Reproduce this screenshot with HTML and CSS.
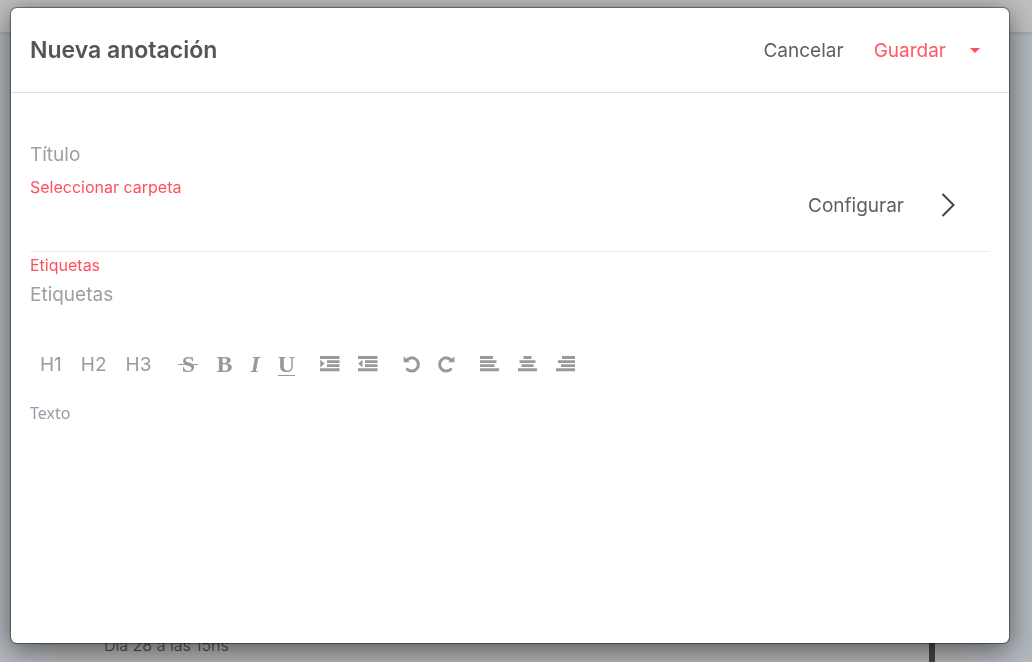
FILE: index.html
```html
<!DOCTYPE html>
<html lang="es">
  <head>
    <meta charset="UTF-8" />
    <meta name="viewport" content="width=device-width, initial-scale=1.0" />
    <title>Nueva anotación</title>
    <link rel="stylesheet" href="styles.css">
  </head>
  <body>
    <div class="page">
      <div class="topbar"></div>
      <div class="card">
        <p class="card-text">Día 28 a las 15hs</p>
        <div class="card-bar"></div>
      </div>
    </div>

    <div class="overlay">
      <form class="modal" role="dialog" aria-labelledby="modal-title">
        <header class="modal-header">
          <h1 id="modal-title">Nueva anotación</h1>
          <button type="button" class="action">Cancelar</button>
          <button type="submit" class="action save">Guardar</button>
          <button type="button" class="caret" aria-label="Más opciones">
            <svg width="10" height="5" viewBox="0 0 10 5"><path d="M0 0h10L5 5z" /></svg>
          </button>
        </header>

        <div class="modal-body">
          <div class="settings">
            <div class="main-fields">
              <input class="field" type="text" placeholder="Título" aria-label="Título">
              <button type="button" class="folder">Seleccionar carpeta</button>
            </div>
            <button type="button" class="configure">
              Configurar
              <svg width="14" height="26" viewBox="0 0 14 26"><path d="M1.500 2l11 11-11 11" /></svg>
            </button>
          </div>

          <div class="tags">
            <label for="tags">Etiquetas</label>
            <input class="field" id="tags" type="text" placeholder="Etiquetas">
          </div>

          <div class="toolbar">
            <div class="group headings">
              <button type="button">H1</button>
              <button type="button">H2</button>
              <button type="button">H3</button>
            </div>
            <div class="group styles">
              <button type="button" class="strike">S</button>
              <button type="button" class="bold">B</button>
              <button type="button" class="italic">I</button>
              <button type="button" class="underline">U</button>
            </div>
            <div class="group">
              <button type="button" aria-label="Aumentar sangría">
                <svg width="20" height="16" viewBox="0 0 20 16"><path d="M0 0h19.500v3H0zM7 4.200h12.500v2.700H7zM7 8.200h12.500v2.700H7zM0 12.300h19.500v3H0zM.3 3.800L4.500 7.600.3 11.400z" /></svg>
              </button>
              <button type="button" aria-label="Reducir sangría">
                <svg width="20" height="16" viewBox="0 0 20 16"><path d="M0 0h19.500v3H0zM7 4.200h12.500v2.700H7zM7 8.200h12.500v2.700H7zM0 12.300h19.500v3H0zM4.500 3.800L.3 7.600l4.200 3.800z" /></svg>
              </button>
            </div>
            <div class="group history">
              <button type="button" aria-label="Deshacer">
                <svg width="18" height="18" viewBox="0 0 18 18"><path class="arc" d="M3.500 5.500A6.600 6.600 0 1 1 4.300 14.300" /><path d="M.6 1.200v6h6.200z" /></svg>
              </button>
              <button type="button" aria-label="Rehacer">
                <svg width="18" height="18" viewBox="0 0 18 18"><path class="arc" d="M14.500 5.500A6.600 6.600 0 1 0 13.700 14.300" /><path d="M17.400 1.200v6h-6.200z" /></svg>
              </button>
            </div>
            <div class="group">
              <button type="button" aria-label="Alinear a la izquierda">
                <svg width="20" height="16" viewBox="0 0 20 16"><path d="M0 0h13v2.900H0zM0 4.200h16.500v2.700H0zM0 8.200h14.500v2.700H0zM0 12.300h19v2.900H0z" /></svg>
              </button>
              <button type="button" aria-label="Centrar">
                <svg width="20" height="16" viewBox="0 0 20 16"><path d="M5.500 0h8v2.900h-8zM1.500 4.200h16v2.700h-16zM3.500 8.200h12v2.700h-12zM0 12.300h19v2.900H0z" /></svg>
              </button>
              <button type="button" aria-label="Alinear a la derecha">
                <svg width="20" height="16" viewBox="0 0 20 16"><path d="M6 0h13v2.900H6zM2 4.200h17v2.700H2zM5 8.200h14v2.700H5zM0 12.300h19v2.900H0z" /></svg>
              </button>
            </div>
          </div>

          <textarea class="editor" placeholder="Texto" aria-label="Texto"></textarea>
        </div>
      </form>
    </div>
  </body>
</html>
```
FILE: styles.css
```css
* {
  box-sizing: border-box;
  margin: 0;
  padding: 0;
}
body {
  color: #555;
  font-family: Inter, "Liberation Sans", sans-serif;
  font-size: 19px;
}
button,
input,
textarea {
  border: none;
  background: none;
  color: inherit;
  font: inherit;
  outline: none;
}
button {
  cursor: pointer;
}

/* page behind the dialog */
.page {
  display: flex;
  flex-direction: column;
  height: 100vh;
  overflow: hidden;
  background-color: #b3b8be;
}
.topbar {
  height: 32px;
  background-color: #bfbfbf;
  box-shadow: 0 1px 4px rgba(0, 0, 0, 0.15);
}
.card {
  flex: 1;
  display: flex;
  align-items: flex-end;
  justify-content: space-between;
  margin: 0 66px 0 54px;
  padding: 0 31px 0 50px;
  background-color: #b5b5b5;
}
.card-text {
  padding-bottom: 5px;
  color: #444;
  font-size: 16px;
  font-weight: 300;
  line-height: 24px;
}
.card-bar {
  width: 6px;
  height: 100%;
  background-color: #444;
}

/* dialog */
.overlay {
  position: fixed;
  inset: 0;
  display: flex;
  padding: 8px 23px 19px 11px;
}
.modal {
  flex: 1;
  display: flex;
  flex-direction: column;
  border-radius: 6px;
  background-color: #fff;
  box-shadow: 0 0 1px 1px rgba(0, 0, 0, 0.4), 0 6px 28px rgba(0, 0, 0, 0.55);
}
.modal-header {
  display: flex;
  align-items: center;
  height: 85px;
  padding: 0 29px 0 19px;
  border-bottom: 1px solid #e0e0e0;
}
.modal-header h1 {
  flex: 1;
  font-size: 23px;
  font-weight: 600;
}
.action,
.configure {
  color: #606060;
}
.action {
  margin-right: 30px;
}
.save {
  margin-right: 24px;
  color: #ff5a64;
}
.caret {
  display: flex;
}
.caret svg {
  fill: #ff4f5a;
}
.modal-body {
  flex: 1;
  display: flex;
  flex-direction: column;
  padding: 0 19px 19px;
}
.settings {
  display: flex;
  justify-content: space-between;
  height: 159px;
  padding-top: 45px;
  border-bottom: 1px solid #ebedf3;
}
.main-fields {
  flex: 1;
}
.field {
  display: block;
  width: 100%;
  height: 32px;
}
.field::placeholder {
  color: #9f9f9f;
}
.folder,
.tags label {
  display: block;
  color: #ff4f5a;
  font-size: 16px;
  line-height: 26px;
}
.folder {
  margin-top: 4px;
}
.configure {
  display: flex;
  align-items: center;
  gap: 37px;
  height: 28px;
  margin: 53px 35px 0 0;
}
.configure svg {
  fill: none;
  stroke: #444;
  stroke-width: 2;
}

/* editor */
.toolbar {
  display: flex;
  align-items: center;
  gap: 25px;
  height: 40px;
  margin-top: 34px;
  padding-left: 10px;
  color: #999;
}
.group {
  display: flex;
  align-items: center;
  gap: 18px;
}
.headings {
  gap: 19px;
  margin-right: 2px;
}
.history {
  gap: 16px;
}
.toolbar svg {
  display: block;
  fill: #999;
}
.toolbar .arc {
  fill: none;
  stroke: #999;
  stroke-width: 3;
  stroke-linecap: round;
}
.styles {
  font-family: "Liberation Serif", serif;
  font-size: 24px;
  font-weight: 700;
}
.strike {
  position: relative;
  width: 20px;
}
.strike::after {
  content: "";
  position: absolute;
  top: 50%;
  left: 0;
  width: 100%;
  height: 1px;
  background-color: #999;
}
.italic {
  font-style: italic;
}
.underline {
  text-decoration: underline 1px;
  text-underline-offset: 3px;
}
.editor {
  flex: 1;
  width: 100%;
  margin-top: 17px;
  resize: none;
  font-family: "Noto Sans", sans-serif;
  font-size: 16px;
  line-height: 24px;
}
.editor::placeholder {
  color: #9a9aa8;
}
```
